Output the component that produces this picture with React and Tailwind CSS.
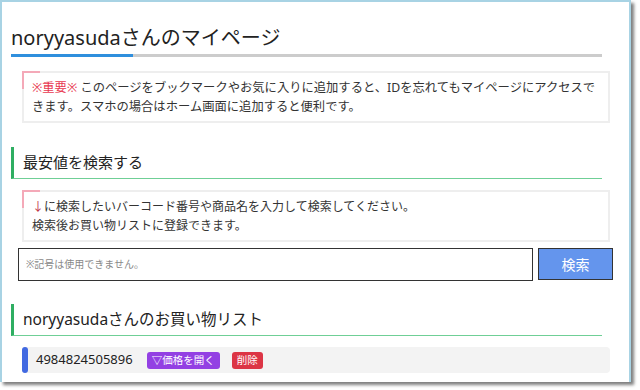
export default function App() {
  return (
    <div className="w-[640px] h-[390px] bg-white overflow-hidden">
      <div className="w-[631px] h-[382px] border-2 border-b-0 border-[#a8d3e4] bg-white shadow-[3px_3px_3px_rgba(0,0,0,0.5)] font-['Noto_Sans','Noto_Sans_CJK_JP',sans-serif] text-[#333] overflow-hidden">
        <div className="pl-[9px] pt-[22px]">
          <h1 className="text-[20px] leading-[28px] text-[#222] whitespace-nowrap">noryyasudaさんのマイページ</h1>
          <div className="flex w-[591px] h-[3px] mt-[2px]">
            <div className="w-[122px] bg-[#2f8fdd]" />
            <div className="flex-1 bg-[#cccccc]" />
          </div>

          <div className="relative ml-[11px] mt-[14px] w-[588px] border-2 border-[#eeeeee] px-[8px] py-[5px] text-[12.3px] leading-[19px] whitespace-nowrap">
            <div className="absolute -top-[2px] -left-[2px] w-[18px] h-[2px] bg-[#f4a9b8]" />
            <div className="absolute -top-[2px] -left-[2px] w-[2px] h-[18px] bg-[#f4a9b8]" />
            <span className="text-[#e8384f]">※重要※</span> このページをブックマークやお気に入りに追加すると、IDを忘れてもマイページにアクセスで
            <br />
            きます。スマホの場合はホーム画面に追加すると便利です。
          </div>

          <h2 className="mt-[24px] w-[591px] h-[32px] border-l-[3px] border-l-[#2fae62] border-b border-b-[#6fcf96] pl-[9px] text-[15px] leading-[30px] text-[#222]">
            最安値を検索する
          </h2>

          <div className="relative ml-[11px] mt-[11px] w-[588px] border-2 border-[#eeeeee] px-[8px] py-[5px] text-[12px] leading-[19px] whitespace-nowrap">
            <div className="absolute -top-[2px] -left-[2px] w-[18px] h-[2px] bg-[#f4a9b8]" />
            <div className="absolute -top-[2px] -left-[2px] w-[2px] h-[18px] bg-[#f4a9b8]" />
            <span className="text-[#c0344a]">↓</span>に検索したいバーコード番号や商品名を入力して検索してください。
            <br />
            検索後お買い物リストに登録できます。
          </div>

          <div className="flex mt-[6px] ml-[7px]">
            <div className="w-[515px] h-[33px] border border-[#333] flex items-center pl-[7px] text-[10px] text-[#888]">
              ※記号は使用できません。
            </div>
            <div className="ml-[5px] w-[75px] h-[32px] bg-[#6495ed] border border-[#333] flex items-center justify-center text-white text-[14px]">
              検索
            </div>
          </div>

          <h2 className="mt-[23px] w-[591px] h-[32px] border-l-[3px] border-l-[#2fae62] border-b border-b-[#6fcf96] pl-[9px] text-[15.5px] leading-[30px] text-[#222] whitespace-nowrap">
            noryyasudaさんのお買い物リスト
          </h2>

          <div className="ml-[11px] mt-[11px] w-[588px] h-[26px] bg-[#f3f3f3] rounded-[4px] flex items-center">
            <div className="w-[6px] h-[26px] bg-[#4169e1] rounded-[3px]" />
            <span className="ml-[8px] text-[13px] text-[#222]">4984824505896</span>
            <span className="ml-[14px] h-[17px] px-[5px] rounded-[3px] bg-[#9340e3] text-white text-[10.5px] leading-[17px]">▽価格を開く</span>
            <span className="ml-[12px] h-[17px] px-[5px] rounded-[3px] bg-[#dc3545] text-white text-[10.5px] leading-[17px]">削除</span>
          </div>
        </div>
      </div>
    </div>
  );
}
